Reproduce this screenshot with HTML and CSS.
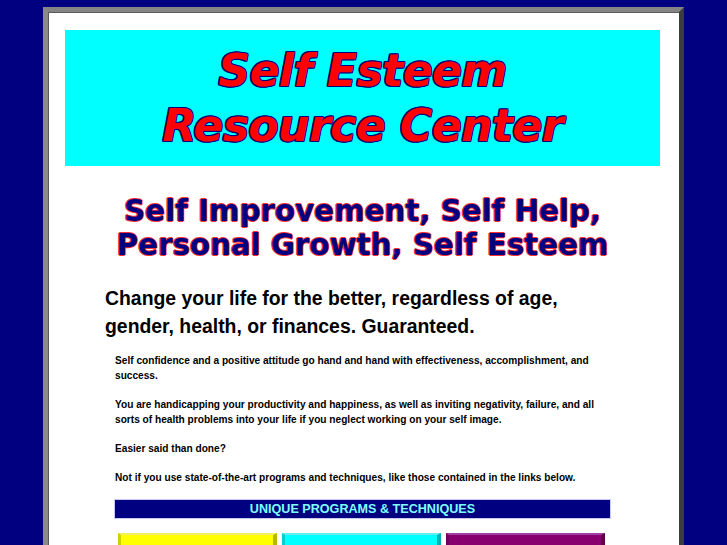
FILE: index.html
```html
<!DOCTYPE html>
<html>
<head>
<meta charset="utf-8">
<title>Self Esteem Resource Center</title>
<link rel="stylesheet" href="styles.css">
</head>
<body>
<div class="frame">
  <div class="banner">
    <h1 class="title">Self Esteem<br>Resource Center</h1>
  </div>
  <h2 class="subtitle">Self Improvement, Self Help,<br>Personal Growth, Self Esteem</h2>
  <p class="lead">Change your life for the better, regardless of age,<br>gender, health, or finances. Guaranteed.</p>
  <div class="body">
    <p>Self confidence and a positive attitude go hand and hand with effectiveness, accomplishment, and success.</p>
    <p>You are handicapping your productivity and happiness, as well as inviting negativity, failure, and all sorts of health problems into your life if you neglect working on your self image.</p>
    <p>Easier said than done?</p>
    <p>Not if you use state-of-the-art programs and techniques, like those contained in the links below.</p>
    <div class="bar">UNIQUE PROGRAMS &amp; TECHNIQUES</div>
    <div class="tiles">
      <div class="tile yellow"></div>
      <div class="tile cyan"></div>
      <div class="tile purple"></div>
    </div>
  </div>
</div>
</body>
</html>
```

FILE: styles.css
```css
html, body {
  margin: 0;
  padding: 0;
  background: #000080;
  overflow: hidden;
}
body {
  height: 545px;
}
.frame {
  margin: 7px 0 0 43px;
  width: 631px;
  height: 700px;
  background: #ffffff;
  border-style: solid;
  border-width: 5px;
  border-color: #858585 #3c3c3c #3c3c3c #8a8a8a;
  box-shadow: inset 1px 0 0 #5a5a5a, inset 0 1px 0 #5a5a5a;
  padding-top: 18px;
}
.banner {
  margin-left: 17px;
  width: 595px;
  height: 136px;
  background: #00ffff;
  display: flex;
  align-items: center;
  justify-content: center;
}
.title {
  margin: 0;
  font-family: "DejaVu Sans", Verdana, sans-serif;
  font-weight: bold;
  font-style: italic;
  font-size: 44px;
  line-height: 55px;
  color: #ff0000;
  text-align: center;
  letter-spacing: -0.5px;
  text-shadow: 1px 0 0 #000080, -1px 0 0 #000080, 0 1px 0 #000080, 0 -1px 0 #000080,
    1px 1px 0 #000080, -1px -1px 0 #000080, 1px -1px 0 #000080, -1px 1px 0 #000080;
}
.subtitle {
  margin: 28px 0 0 17px;
  width: 595px;
  font-family: "DejaVu Sans", Verdana, sans-serif;
  font-weight: bold;
  font-size: 29.3px;
  line-height: 34px;
  color: #000080;
  text-align: center;
  text-shadow: 1px 0 0 #ff3030, -1px 0 0 #ff3030, 0 1px 0 #ff3030, 0 -1px 0 #ff3030;
}
.lead {
  margin: 22px 0 0 57px;
  font-family: "Liberation Sans", Arial, sans-serif;
  font-weight: bold;
  font-size: 19.4px;
  line-height: 28px;
  color: #000000;
}
.body {
  margin: 13px 0 0 67px;
  width: 495px;
  font-family: "Liberation Sans", Arial, sans-serif;
  font-weight: bold;
  font-size: 10.15px;
  line-height: 15px;
  color: #000000;
}
.body p {
  margin: 0 0 14px 0;
}
.bar {
  margin-top: 15px;
  height: 18px;
  background: #000080;
  color: #80ffff;
  font-size: 12.6px;
  line-height: 18px;
  text-align: center;
  box-shadow: 0 0 0 1px #c8c8f0;
}
.tiles {
  margin: 15px 0 0 3px;
  display: flex;
  gap: 5px;
}
.tile {
  width: 159px;
  height: 40px;
  box-sizing: border-box;
  border-style: solid;
  border-width: 2px 4px 0 3px;
}
.yellow {
  background: #ffff00;
  border-color: #f0f060 #b8b800 #b8b800 #d0d000;
}
.cyan {
  background: #00ffff;
  border-color: #60f0f0 #00b0b0 #00b0b0 #00d0d0;
}
.purple {
  background: #880070;
  border-color: #a040a0 #600050 #600050 #700060;
}
```
